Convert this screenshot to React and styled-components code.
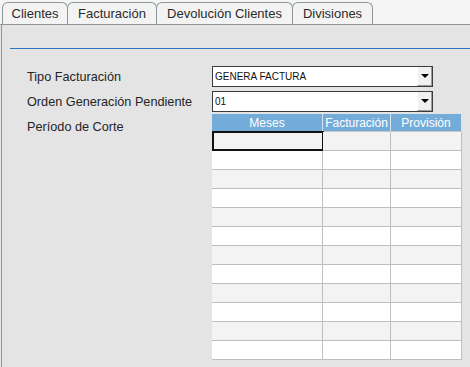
import React from 'react';
import styled, { createGlobalStyle } from 'styled-components';

const Global = createGlobalStyle`
  html, body { margin: 0; padding: 0; background: #e4e4e4; }
  body { font-family: "Liberation Sans", Arial, sans-serif; }
`;

const Page = styled.div`
  width: 470px;
  height: 367px;
  display: flex;
  flex-direction: column;
  overflow: hidden;
`;

const TabBar = styled.div`
  display: flex;
  align-items: flex-end;
  height: 24px;
  padding-left: 2px;
  background: #f5f5f5;
  border-bottom: 1px solid #8d9799;
`;

const Tab = styled.div`
  height: 22px;
  width: ${p => p.w}px;
  box-sizing: border-box;
  margin-right: -1px;
  display: flex;
  align-items: center;
  justify-content: center;
  border: 1px solid #8d9799;
  border-bottom: none;
  border-radius: 6px 6px 0 0;
  background: #f3f3f3;
  color: #2b2b2b;
  font-size: 13px;
`;

const Panel = styled.div`
  flex: 1;
  margin-left: 1px;
  border-left: 1px solid #8d9799;
  background: #e4e4e4;
  padding-top: 23px;
`;

const Rule = styled.div`
  margin-left: 8px;
  height: 1px;
  background: #2a78c2;
`;

const Form = styled.div`
  display: grid;
  grid-template-columns: 185px auto;
  row-gap: 4px;
  padding: 17px 0 0 25px;
`;

const Label = styled.div`
  font-size: 12.7px;
  color: #242424;
  height: 21px;
  display: flex;
  align-items: center;
`;

const Select = styled.div`
  width: 221px;
  height: 21px;
  box-sizing: border-box;
  border: 1px solid #3c3c3c;
  background: #fff;
  display: flex;
  align-items: center;
`;

const SelectText = styled.div`
  flex: 1;
  padding-left: 2px;
  font-size: 10px;
  color: #111;
`;

const Arrow = styled.div`
  width: 15px;
  height: 19px;
  box-sizing: border-box;
  background: #f0f0f0;
  border-left: 1px solid #fff;
  border-right: 1px solid #9a9a9a;
  border-bottom: 1px solid #9a9a9a;
  display: flex;
  align-items: center;
  justify-content: center;

  &::after {
    content: '';
    border-left: 4px solid transparent;
    border-right: 4px solid transparent;
    border-top: 4px solid #000;
  }
`;

const Grid = styled.div`
  margin-top: -2px;
  width: 250px;
  display: grid;
  grid-template-columns: 111px 68px 71px;
`;

const Head = styled.div`
  height: 18px;
  background: #74acd9;
  color: #fff;
  font-size: 12px;
  display: flex;
  align-items: center;
  justify-content: center;
  border-right: 1px solid #d6e4ef;
  border-bottom: 1px solid #c6c6c6;
  box-sizing: border-box;
`;

const Cell = styled.div`
  height: 19px;
  box-sizing: border-box;
  background: ${p => (p.odd ? '#f3f3f3' : '#fff')};
  border-bottom: 1px solid #bfbfbf;
  border-right: 1px solid #bfbfbf;
  ${p => p.selected && 'border: 2px solid #111; margin-top: -1px; height: 20px; width: 112px;'}
`;

const tabs = [
  { name: 'Clientes', w: 66 },
  { name: 'Facturación', w: 90, active: true },
  { name: 'Devolución Clientes', w: 137 },
  { name: 'Divisiones', w: 81 },
];

const rows = Array.from({ length: 12 }, (_, i) => i);

const App = () => (
  <Page>
    <Global />
    <TabBar>
      {tabs.map(t => (
        <Tab key={t.name} w={t.w} active={t.active}>{t.name}</Tab>
      ))}
    </TabBar>
    <Panel>
      <Rule />
      <Form>
        <Label>Tipo Facturación</Label>
        <Select>
          <SelectText>GENERA FACTURA</SelectText>
          <Arrow />
        </Select>
        <Label>Orden Generación Pendiente</Label>
        <Select>
          <SelectText>01</SelectText>
          <Arrow />
        </Select>
        <Label>Período de Corte</Label>
        <Grid>
          <Head>Meses</Head>
          <Head>Facturación</Head>
          <Head>Provisión</Head>
          {rows.map(r => (
            <React.Fragment key={r}>
              <Cell odd={r % 2 === 0} selected={r === 0} />
              <Cell odd={r % 2 === 0} />
              <Cell odd={r % 2 === 0} />
            </React.Fragment>
          ))}
        </Grid>
      </Form>
    </Panel>
  </Page>
);

export default App;
